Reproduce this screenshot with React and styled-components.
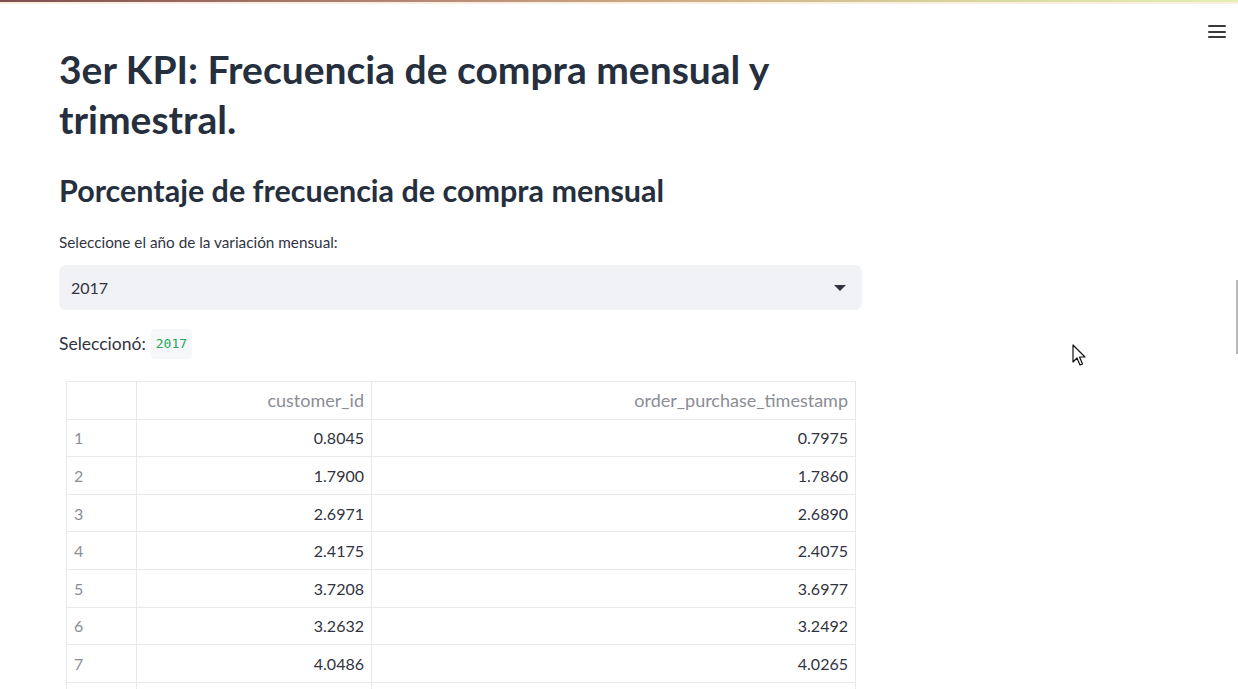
import React from "react";
import styled, { createGlobalStyle } from "styled-components";

const GlobalStyle = createGlobalStyle`
  html, body {
    margin: 0;
    padding: 0;
    background: #ffffff;
    font-family: "Lato", "Noto Sans", sans-serif;
    color: #31333f;
    overflow: hidden;
  }
`;

const rows = [
  ["1", "0.8045", "0.7975"],
  ["2", "1.7900", "1.7860"],
  ["3", "2.6971", "2.6890"],
  ["4", "2.4175", "2.4075"],
  ["5", "3.7208", "3.6977"],
  ["6", "3.2632", "3.2492"],
  ["7", "4.0486", "4.0265"],
  ["8", "4.4112", "4.3985"],
];

const Page = styled.div`
  position: relative;
  height: 689px;
  overflow: hidden;
`;

const Decoration = styled.div`
  height: 2px;
  background: linear-gradient(90deg, #7e4f4c 0%, #b88b78 35%, #cfae86 55%, #d8d9a0 80%, #e6f0b4 100%);
  border-bottom: 2px solid #fbefe2;
`;

const Shell = styled.div`
  display: flex;
  align-items: flex-start;
`;

const Main = styled.main`
  width: 803px;
  margin-left: 59px;
  padding-top: 40px;
`;

const Toolbar = styled.div`
  margin-left: auto;
  padding: 21px 12px 0 0;
`;

const MenuButton = styled.button`
  border: 0;
  background: transparent;
  padding: 0;
  width: 18px;
  height: 13px;
  display: flex;
  flex-direction: column;
  justify-content: space-between;
  cursor: pointer;

  span {
    display: block;
    height: 2px;
    background: #3a3a3a;
    border-radius: 1px;
  }
`;

const Title = styled.h1`
  margin: 0;
  font-size: 39px;
  line-height: 50px;
  font-weight: 700;
  color: #262f3e;
`;

const Subtitle = styled.h2`
  margin: 26px 0 0;
  font-size: 30.5px;
  line-height: 40px;
  font-weight: 700;
  color: #262f3e;
`;

const Label = styled.label`
  display: block;
  margin-top: 22px;
  font-size: 15.3px;
  line-height: 20px;
  color: #31333f;
`;

const Select = styled.div`
  margin-top: 13px;
  height: 45px;
  background: #f0f2f6;
  border-radius: 7px;
  display: flex;
  align-items: center;
  justify-content: space-between;
  padding: 0 16px 0 12px;
  font-size: 16px;
  color: #31333f;
`;

const Caret = styled.span`
  width: 0;
  height: 0;
  border-left: 6px solid transparent;
  border-right: 6px solid transparent;
  border-top: 6px solid #31333f;
`;

const Selected = styled.p`
  margin: 19px 0 0;
  font-size: 17.5px;
  line-height: 24px;
  display: flex;
  align-items: center;
  gap: 5px;
`;

const Code = styled.code`
  font-family: "DejaVu Sans Mono", "Liberation Mono", monospace;
  font-size: 13px;
  color: #2aa55a;
  background: #f6f7f8;
  border-radius: 4px;
  padding: 3px 5px;
`;

const Table = styled.table`
  margin: 22px 0 0 7px;
  width: 789px;
  border-collapse: collapse;
  font-size: 16px;
  table-layout: fixed;
`;

const Cell = styled.td`
  height: 36.6px;
  padding: 0 7px;
  border: 1px solid #e6e9ef;
  text-align: ${(p) => (p.$index ? "left" : "right")};
  color: ${(p) => (p.$muted ? "#8b8d95" : "#31333f")};
  font-size: ${(p) => (p.$head ? "18px" : "16px")};
  font-weight: 400;
  white-space: nowrap;
`;

const Scroll = styled.div`
  position: absolute;
  right: 0;
  top: 280px;
  width: 2px;
  height: 74px;
  background: #b9b9b9;
`;

const Pointer = styled.svg`
  position: absolute;
  left: 1072px;
  top: 344px;
`;

export default function App() {
  return (
    <Page>
      <GlobalStyle />
      <Decoration />
      <Shell>
        <Main>
          <Title>3er KPI: Frecuencia de compra mensual y trimestral.</Title>
          <Subtitle>Porcentaje de frecuencia de compra mensual</Subtitle>
          <Label>Seleccione el año de la variación mensual:</Label>
          <Select>
            <span>2017</span>
            <Caret />
          </Select>
          <Selected>
            Seleccionó: <Code>2017</Code>
          </Selected>
          <Table>
            <colgroup>
              <col style={{ width: 70 }} />
              <col style={{ width: 235 }} />
              <col style={{ width: 484 }} />
            </colgroup>
            <thead>
              <tr>
                <Cell as="th" $muted $head />
                <Cell as="th" $muted $head>customer_id</Cell>
                <Cell as="th" $muted $head>order_purchase_timestamp</Cell>
              </tr>
            </thead>
            <tbody>
              {rows.map((r) => (
                <tr key={r[0]}>
                  <Cell $index $muted>{r[0]}</Cell>
                  <Cell>{r[1]}</Cell>
                  <Cell>{r[2]}</Cell>
                </tr>
              ))}
            </tbody>
          </Table>
        </Main>
        <Toolbar>
          <MenuButton aria-label="menu">
            <span />
            <span />
            <span />
          </MenuButton>
        </Toolbar>
      </Shell>
      <Scroll />
      <Pointer width="16" height="24" viewBox="0 0 16 24">
        <path
          d="M1 1 L1 18 L5 14 L8 21 L10.5 20 L7.5 13 L13 13 Z"
          fill="#ffffff"
          stroke="#111111"
          strokeWidth="1.2"
          strokeLinejoin="round"
        />
      </Pointer>
    </Page>
  );
}
